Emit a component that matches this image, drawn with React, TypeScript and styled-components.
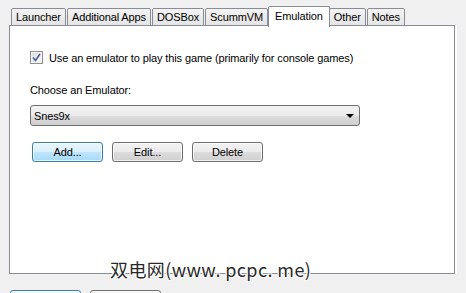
import React from "react";
import styled, { createGlobalStyle } from "styled-components";

const Global = createGlobalStyle`
  html, body { margin: 0; padding: 0; background: #f0f0f0; }
  body { font-family: "Liberation Sans", Arial, sans-serif; font-size: 11px; color: #000; letter-spacing: -0.12px; }
`;

const Page = styled.div`
  position: relative;
  width: 466px;
  height: 293px;
  overflow: hidden;
  padding: 6px 0 0 9px;
  box-sizing: border-box;
`;

const TabStrip = styled.div`
  display: flex;
  align-items: flex-end;
  padding-left: 2px;
  height: 20px;
  position: relative;
  z-index: 1;
`;

const Tab = styled.div<{ $active?: boolean }>`
  box-sizing: border-box;
  height: ${(p) => (p.$active ? "21px" : "18px")};
  padding: ${(p) => (p.$active ? "0 6px 2px" : "0 4px")};
  margin: ${(p) => (p.$active ? "0 -1px -1px -1px" : "0 1px 0 0")};
  border: 1px solid #898c95;
  border-bottom: ${(p) => (p.$active ? "none" : "1px solid #898c95")};
  background: ${(p) => (p.$active ? "#fff" : "linear-gradient(#f3f3f3, #e5e5e5)")};
  display: flex;
  align-items: center;
  font-size: 11px;
  white-space: nowrap;
  border-radius: 2px 2px 0 0;
`;

const Panel = styled.div`
  box-sizing: border-box;
  width: 446px;
  height: 249px;
  margin-top: -1px;
  background: #fff;
  border: 1px solid #898c95;
  box-shadow: 2px 0 0 #fff;
  padding: 25px 20px 0 20px;
`;

const CheckRow = styled.label`
  display: flex;
  align-items: center;
  gap: 6px;
  height: 13px;
  font-size: 11px;
`;

const CheckBox = styled.span`
  width: 13px;
  height: 13px;
  box-sizing: border-box;
  border: 1px solid #8e8f8f;
  background: linear-gradient(135deg, #dcdcdc, #fbfbfb);
  display: flex;
  align-items: center;
  justify-content: center;
  box-shadow: inset 0 0 0 1px #f4f4f4;
`;

const Label = styled.div`
  margin-top: 19px;
  height: 14px;
  line-height: 14px;
`;

const Select = styled.div`
  margin-top: 8px;
  box-sizing: border-box;
  width: 330px;
  height: 21px;
  border: 1px solid #707070;
  border-radius: 3px;
  background: linear-gradient(#f2f2f2 0%, #ebebeb 50%, #dddddd 51%, #cfcfcf 100%);
  display: flex;
  align-items: center;
  justify-content: space-between;
  padding: 0 5px 0 3px;
`;

const Arrow = styled.span`
  width: 0;
  height: 0;
  border-left: 4px solid transparent;
  border-right: 4px solid transparent;
  border-top: 4px solid #000;
`;

const ButtonRow = styled.div`
  display: flex;
  gap: 9px;
  margin-top: 16px;
  padding-left: 2px;
`;

const Button = styled.div<{ $hot?: boolean }>`
  box-sizing: border-box;
  width: 71px;
  height: 20px;
  border: 1px solid ${(p) => (p.$hot ? "#3c7fb1" : "#707070")};
  border-radius: 3px;
  background: ${(p) =>
    p.$hot
      ? "linear-gradient(#eaf6fd 0%, #d9f0fc 50%, #bee6fd 51%, #a7d9f5 100%)"
      : "linear-gradient(#f2f2f2 0%, #ebebeb 50%, #dddddd 51%, #cfcfcf 100%)"};
  box-shadow: inset 0 0 0 1px rgba(255, 255, 255, 0.7);
  display: flex;
  align-items: center;
  justify-content: center;
`;

const Footer = styled.div`
  display: flex;
  gap: 9px;
  margin-top: 16px;
  padding-left: 1px;
`;

const Watermark = styled.div`
  position: absolute;
  left: 110px;
  top: 258px;
  font-family: "Noto Sans CJK SC", "Noto Sans", sans-serif;
  font-size: 18px;
  line-height: 22px;
  letter-spacing: 0.4px;
  color: #2a2a2a;
  text-shadow: 0 0 2px #fff, 0 0 2px #fff, 1px 1px 0 #fff, -1px -1px 0 #fff, 1px -1px 0 #fff, -1px 1px 0 #fff;
  white-space: nowrap;
`;

const tabs = ["Launcher", "Additional Apps", "DOSBox", "ScummVM", "Emulation", "Other", "Notes"];

export default function App() {
  return (
    <Page>
      <Global />
      <TabStrip>
        {tabs.map((t) => (
          <Tab key={t} $active={t === "Emulation"}>
            {t}
          </Tab>
        ))}
      </TabStrip>
      <Panel>
        <CheckRow>
          <CheckBox>
            <svg width="9" height="9" viewBox="0 0 9 9">
              <path d="M1 4.5 L3.5 7.5 L8 1" fill="none" stroke="#4a5f97" strokeWidth="1.6" />
            </svg>
          </CheckBox>
          Use an emulator to play this game (primarily for console games)
        </CheckRow>
        <Label>Choose an Emulator:</Label>
        <Select>
          <span>Snes9x</span>
          <Arrow />
        </Select>
        <ButtonRow>
          <Button $hot>Add...</Button>
          <Button>Edit...</Button>
          <Button>Delete</Button>
        </ButtonRow>
      </Panel>
      <Footer>
        <Button $hot />
        <Button />
      </Footer>
      <Watermark>双电网(www. pcpc. me)</Watermark>
    </Page>
  );
}
